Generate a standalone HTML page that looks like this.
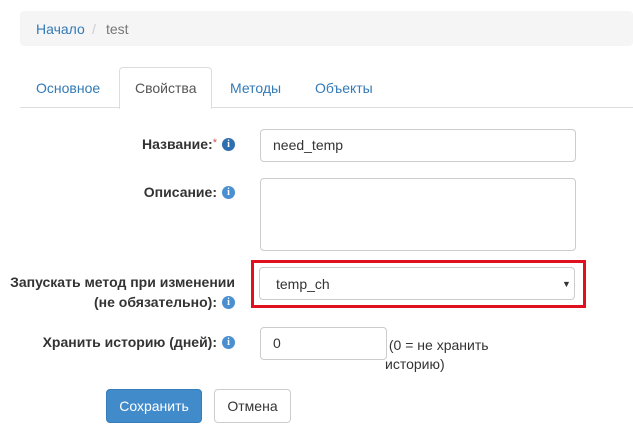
<!DOCTYPE html>
<html><head><meta charset="utf-8"><style>
body{margin:0;width:633px;height:441px;background:#fff;font-family:"Liberation Sans",Arial,sans-serif;font-size:14px;color:#333;position:relative;overflow:hidden}
.a{position:absolute}
.bc{left:20px;top:11px;width:613px;height:35px;background:#f5f5f5;border-radius:4px}
.lnk{color:#337ab7}
.tabline{left:20px;top:107px;width:613px;height:1px;background:#ddd}
.tab{left:119px;top:67px;width:91px;height:41px;border:1px solid #ddd;border-bottom:none;border-radius:4px 4px 0 0;background:#fff}
.in{border:1px solid #ccc;border-radius:4px;background:#fff;box-sizing:border-box}
.lab{font-weight:bold;font-size:14px;text-align:right;color:#333;white-space:nowrap}
.i{display:inline-block;width:13px;height:13px;border-radius:50%;background:#2f6fae;color:#fff;font-size:10px;font-weight:bold;text-align:center;line-height:13px;font-family:"Liberation Serif",serif;vertical-align:2px;margin-left:5px}
.i2{background:#4a8fd0}
</style></head><body>
<div class="a bc"></div>
<div class="a lnk" style="left:36px;top:21px">Начало</div>
<div class="a" style="left:92px;top:21px;color:#ccc">/</div>
<div class="a" style="left:106px;top:21px;color:#777">test</div>
<div class="a tabline"></div>
<div class="a tab"></div>
<div class="a lnk" style="left:36px;top:80px">Основное</div>
<div class="a" style="left:135px;top:80px;color:#555">Свойства</div>
<div class="a lnk" style="left:230px;top:80px">Методы</div>
<div class="a lnk" style="left:315px;top:80px">Объекты</div>

<div class="a lab" style="right:398px;top:136px">Название:<span style="color:#d9534f;font-weight:normal;vertical-align:3px;font-size:11px">*</span><span class="i">i</span></div>
<div class="a in" style="left:260px;top:129px;width:316px;height:33px"></div>
<div class="a" style="left:273px;top:137px">need_temp</div>

<div class="a lab" style="right:398px;top:184px">Описание:<span class="i i2">i</span></div>
<div class="a in" style="left:260px;top:178px;width:316px;height:73px"></div>

<div class="a lab" style="right:398px;top:272px;line-height:20px">Запускать метод при изменении<br>(не обязательно):<span class="i i2">i</span></div>
<div class="a" style="left:251px;top:260px;width:329px;height:42px;border:3px solid #e0101e"></div>
<div class="a in" style="left:259px;top:267px;width:316px;height:33px"></div>
<div class="a" style="left:276px;top:276px">temp_ch</div>
<div class="a" style="left:562px;top:279px;font-size:9px;color:#333">▼</div>

<div class="a lab" style="right:398px;top:334px">Хранить историю (дней):<span class="i i2">i</span></div>
<div class="a in" style="left:260px;top:327px;width:127px;height:33px"></div>
<div class="a" style="left:273px;top:335px">0</div>
<div class="a" style="left:385px;top:336px;color:#333;line-height:19px">&nbsp;(0 = не хранить<br>историю)</div>

<div class="a" style="left:106px;top:389px;width:96px;height:34px;background:#428bca;border:1px solid #357ebd;border-radius:4px;box-sizing:border-box;color:#fff;text-align:center;line-height:32px">Сохранить</div>
<div class="a" style="left:214px;top:389px;width:77px;height:34px;background:#fff;border:1px solid #ccc;border-radius:4px;box-sizing:border-box;color:#333;text-align:center;line-height:32px">Отмена</div>
</body></html>
